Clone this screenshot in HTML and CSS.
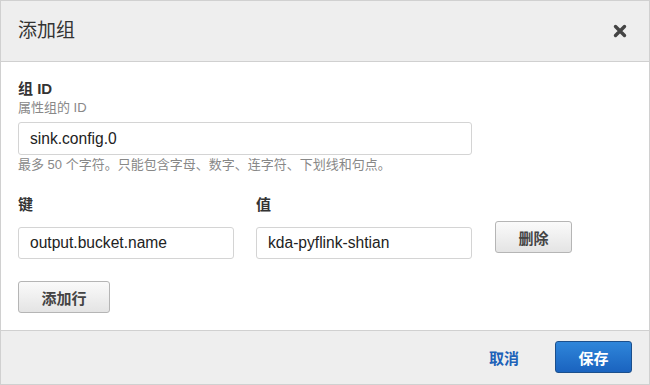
FILE: index.html
```html
<!DOCTYPE html>
<html lang="zh">
<head>
<meta charset="utf-8">
<link rel="stylesheet" href="styles.css">
</head>
<body>
<div class="modal">
  <div class="header">
    <h2 class="title">添加组</h2>
    <button class="close" aria-label="关闭">
      <svg width="14" height="14" viewBox="0 0 14 14"><path d="M2.5 2.5 L11.5 11.5 M11.5 2.5 L2.5 11.5" stroke="#444" stroke-width="3.4" stroke-linecap="round"/></svg>
    </button>
  </div>
  <div class="body">
    <div class="label">组 ID</div>
    <div class="sublabel">属性组的 ID</div>
    <input class="input wide" value="sink.config.0">
    <div class="hint">最多 50 个字符。只能包含字母、数字、连字符、下划线和句点。</div>
    <div class="row">
      <div class="col">
        <div class="label">键</div>
        <input class="input half" value="output.bucket.name">
      </div>
      <div class="col">
        <div class="label">值</div>
        <input class="input half" value="kda-pyflink-shtian">
      </div>
      <button class="btn del">删除</button>
    </div>
    <button class="btn add">添加行</button>
  </div>
  <div class="footer">
    <a class="cancel">取消</a>
    <button class="btn primary">保存</button>
  </div>
</div>
</body>
</html>
```

FILE: styles.css
```css
* { box-sizing: border-box; }
html, body { margin: 0; padding: 0; background: #fff; }
body {
  font-family: "Liberation Sans", "Noto Sans CJK SC", sans-serif;
  color: #333;
}
.modal {
  width: 650px;
  height: 385px;
  border: 1px solid #d0d0d0;
  display: flex;
  flex-direction: column;
}
.header {
  height: 61px;
  background: #eeeeee;
  border-bottom: 1px solid #d0d0d0;
  display: flex;
  align-items: center;
  justify-content: space-between;
  padding: 0 22px 0 17px;
}
.title {
  margin: 0;
  font-size: 19px;
  font-weight: normal;
  color: #333;
  line-height: 24px;
}
.close {
  border: 0;
  background: transparent;
  padding: 0;
  width: 14px;
  height: 14px;
  display: flex;
}
.body {
  flex: 1;
  padding: 18px 17px 0 17px;
}
.label {
  font-size: 15px;
  font-weight: bold;
  line-height: 18px;
  color: #333;
}
.sublabel {
  font-size: 13px;
  line-height: 16px;
  color: #888;
  margin-top: 2px;
}
.input {
  display: block;
  height: 33px;
  border: 1px solid #d4d4d4;
  border-radius: 3px;
  padding: 0 11px;
  font-family: "Liberation Sans", "Noto Sans CJK SC", sans-serif;
  font-size: 15.6px;
  color: #222;
  background: #fff;
  outline: none;
}
.input.wide { width: 454px; margin-top: 6px; }
.input.half { width: 216px; height: 32px; margin-top: 13px; }
.hint {
  font-size: 13px;
  line-height: 16px;
  color: #888;
  margin-top: 2px;
}
.row {
  display: flex;
  align-items: flex-start;
  gap: 22px;
  margin-top: 23px;
}
.btn {
  height: 32px;
  border: 1px solid #b5b5b5;
  border-radius: 3px;
  background: linear-gradient(#fafafa, #e4e4e4);
  font-family: "Liberation Sans", "Noto Sans CJK SC", sans-serif;
  font-size: 15px;
  font-weight: bold;
  color: #444;
  padding: 0;
}
.del { width: 77px; margin-top: 25px; margin-left: 1px; }
.add { width: 92px; margin-top: 22px; }
.footer {
  height: 54px;
  background: #eeeeee;
  border-top: 1px solid #d0d0d0;
  display: flex;
  align-items: center;
  justify-content: flex-end;
  padding: 0 17px 1px 0;
  gap: 36px;
}
.cancel {
  font-size: 15px;
  font-weight: bold;
  color: #2062b8;
}
.primary {
  width: 77px;
  height: 32px;
  border: 1px solid #1b4f8c;
  background: linear-gradient(#2f86da, #1a63bf);
  color: #fff;
}
```
